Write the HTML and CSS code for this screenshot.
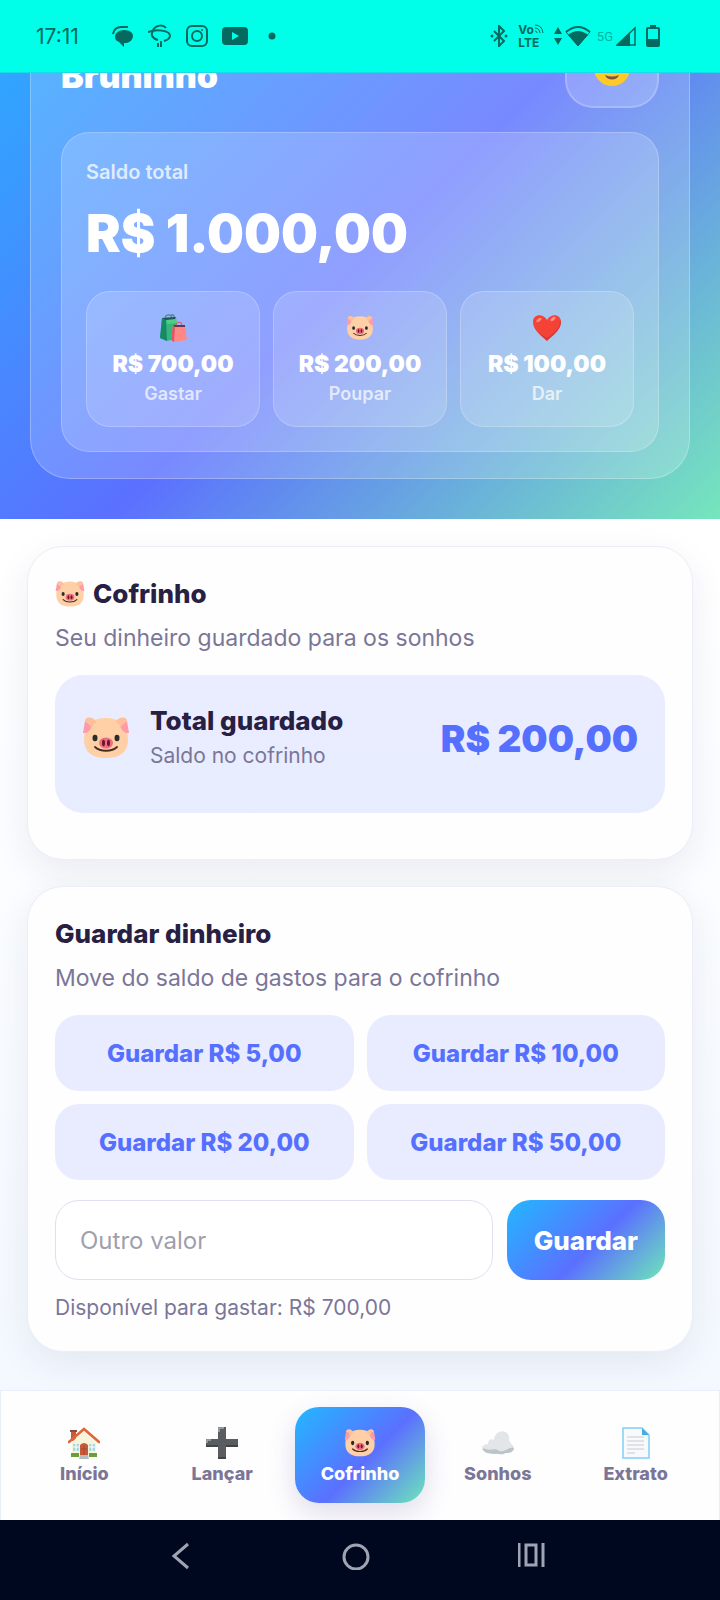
FILE: index.html
```html
<!DOCTYPE html>
<html lang="pt-BR">
<head>
    <meta charset="UTF-8">
    <meta name="viewport" content="width=device-width, initial-scale=1.0">
    <title>Cofrinho</title>
    <link rel="stylesheet" href="styles.css">
</head>
<body>
    <!-- Shared icons -->
    <svg class="sprite" aria-hidden="true">
        <symbol id="pig" viewBox="0 0 48 42">
            <path d="M24 1c14 0 22 8 22 21 0 14-9 19-22 19S2 36 2 22C2 9 10 1 24 1z" fill="#ffd0a6"/>
            <path d="M3 4L1 16q6 1 9-7zM45 4l2 12q-6 1-9-7z" fill="#ff9aa8"/>
            <path d="M3 5C3 0 7 0 10 1c3 1 4 3 4 5-2 0-4 2-5 5C8 7 6 5 3 5zM45 5c0-5-4-5-7-4-3 1-4 3-4 5 2 0 4 2 5 5 1-4 3-6 6-6z" fill="#ffbf98"/>
            <ellipse cx="13" cy="21" rx="2.500" ry="3.200" fill="#2b2b2b"/>
            <ellipse cx="35" cy="21" rx="2.500" ry="3.200" fill="#2b2b2b"/>
            <path d="M13 30c5 5 17 5 22 0" fill="none" stroke="#4a2b25" stroke-width="1.800" stroke-linecap="round"/>
            <ellipse cx="24" cy="26" rx="7" ry="5.500" fill="#ee6e80"/>
            <ellipse cx="21.500" cy="26" rx="1.500" ry="3.200" fill="#6b1630"/>
            <ellipse cx="26.500" cy="26" rx="1.500" ry="3.200" fill="#6b1630"/>
        </symbol>
        <symbol id="bags" viewBox="0 0 28 28">
            <path d="M6 5c0-5 7-6 7 0M15 5c1-3-1-5-3-4" fill="none" stroke="#3d8f80" stroke-width="1.200"/>
            <path d="M3 4l14-1 1 21-10 3-7-3z" fill="#33b87b"/>
            <path d="M3 4l4 1 1 22-7-3z" fill="#168a67"/>
            <path d="M7 5l10-2 1 6-10 1z" fill="#50cc87"/>
            <path d="M3 4l14-1-1 2-9 1z" fill="#25505a"/>
            <path d="M17 12c0-5 6-5 6 0" fill="none" stroke="#d85b68" stroke-width="1.200"/>
            <path d="M14 11h12l2 15-13 2-3-2z" fill="#ff8786"/>
            <path d="M14 11l2 1-1 16-3-2z" fill="#dc5868"/>
            <path d="M14 11h12v2H16z" fill="#653844"/>
        </symbol>
        <symbol id="heart" viewBox="0 0 28 26">
            <path d="M14 26C9 21 0 15 0 7 0-1 10-2 14 5c4-7 14-6 14 2 0 8-9 14-14 19z" fill="#f44336"/>
            <path d="M27 5c1 8-7 14-13 18C9 20 4 17 1 11c2 6 8 10 13 15 5-5 14-11 14-19z" fill="#c62828" opacity=".5"/>
            <ellipse cx="6" cy="5" rx="3" ry="1.500" fill="#ff8a80" transform="rotate(-35 6 5)"/>
            <ellipse cx="20" cy="4" rx="3" ry="1.500" fill="#ff8a80" transform="rotate(-35 20 4)"/>
        </symbol>
        <symbol id="smile" viewBox="0 0 36 36">
            <circle cx="18" cy="18" r="18" fill="#ffca28"/>
            <circle cx="11" cy="13" r="2.500" fill="#5d4037"/>
            <circle cx="25" cy="13" r="2.500" fill="#5d4037"/>
            <path d="M11 25q7 3 14 0c-2 6-12 6-14 0z" fill="#795548"/>
        </symbol>
        <symbol id="house" viewBox="0 0 32 32">
            <path d="M3 3h5v11H3z" fill="#c75b39"/>
            <path d="M2 3h7v2H2z" fill="#8d4b3b"/>
            <path d="M4 15L16 4l12 11v14H4z" fill="#faf3dc"/>
            <path d="M1 15L16 2l15 13" fill="none" stroke="#df6639" stroke-width="2.600" stroke-linecap="round"/>
            <path d="M5 17h6v7H5zM21 17h6v7h-6z" fill="#a7d9df"/>
            <path d="M8 17v7M5 20h6M24 17v7M21 20h6" stroke="#fff"/>
            <path d="M12 29V18q4-4 8 0v11z" fill="#c75b39"/>
            <path d="M16 18v10M13 22h6" stroke="#a34930"/>
            <path d="M3 26h8v4H3zM21 26h8v4h-8z" fill="#689f38"/>
            <path d="M12 28h8l1 4H11z" fill="#b7bcc1"/>
        </symbol>
        <symbol id="plus" viewBox="0 0 32 32">
            <path d="M12 0h8v12h12v8H20v12h-8V20H0v-8h12z" fill="#5a5d5f"/>
            <path d="M13 5V1h5M1 16v-3h4" fill="none" stroke="#a8aaab" stroke-width="1.500"/>
            <path d="M12 31h8M0 19h12M20 19h12" stroke="#424547" stroke-width="2"/>
        </symbol>
        <symbol id="cloud" viewBox="0 0 32 24">
            <path d="M4 21c-7-2-4-8 2-8 0-4 3-6 6-4 1-12 16-11 15-1 0 4 5 6 5 9 0 5-6 5-9 5-3 3-7 0-10 1-3 0-6 0-9-2z" fill="#e2e6e9"/>
            <path d="M1 17c7 4 11-1 16 3 6 2 9-5 15-3-1 5-6 5-9 5-3 3-7 0-10 1-5-1-12 0-12-6z" fill="#b9c5cb"/>
        </symbol>
        <symbol id="page" viewBox="0 0 28 32">
            <path d="M1 1h19l7 7v23H1z" fill="#f7f9fa" stroke="#81d0f5" stroke-width="1.500"/>
            <path d="M20 1l7 7h-7z" fill="#42aee0"/>
            <path d="M5 10h17M5 14h17M5 18h17M5 22h17M5 26h8" stroke="#c6ccd0"/>
        </symbol>
    </svg>

    <div class="status-bar">
        <div class="status-group">
            <span class="clock">17:11</span>
            <svg width="22" height="22" viewBox="0 0 22 22">
                <path d="M12 5c6 0 9 3 9 6s-3 7-7 7h-2v4l-5-5c-3-1-4-3-4-5 0-4 4-7 9-7z" fill="currentColor"/>
                <path d="M1 9C2 4 5 2 9 2h7" fill="none" stroke="currentColor" stroke-width="2"/>
            </svg>
            <svg width="24" height="24" viewBox="0 0 24 24" fill="none" stroke="currentColor">
                <path d="M5 6C8 1 15 0 18 4" stroke-width="2"/>
                <path d="M0 8c8-3 22-2 22 4 0 3-3 4-6 5" stroke-width="2"/>
                <path d="M5 7c-3 4 0 8 5 9" stroke-width="2"/>
                <path d="M10 23v-4M13 23v-6" stroke-width="2"/>
            </svg>
            <svg width="22" height="22" viewBox="0 0 22 22" fill="none" stroke="currentColor" stroke-width="2">
                <rect x="1" y="1" width="20" height="20" rx="5"/>
                <circle cx="11" cy="11" r="5"/>
                <circle cx="16" cy="5" r="1" fill="currentColor" stroke="none"/>
            </svg>
            <svg width="26" height="20" viewBox="0 0 26 20">
                <rect x="0" y="1" width="26" height="18" rx="4" fill="currentColor"/>
                <path d="M10 6l7 4-7 4z" fill="#00ffe8"/>
            </svg>
            <svg class="more-dot" width="8" height="8" viewBox="0 0 8 8"><circle cx="4" cy="4" r="3.500" fill="currentColor"/></svg>
        </div>
        <div class="status-group status-right">
            <svg width="18" height="22" viewBox="0 0 18 22">
                <path d="M4 6l10 10-5 5V1l5 5L4 16" fill="none" stroke="currentColor" stroke-width="2"/>
                <circle cx="2" cy="11" r="1.500" fill="currentColor"/>
                <circle cx="16" cy="11" r="1.500" fill="currentColor"/>
            </svg>
            <span class="volte">
                <span>Vo<svg width="10" height="10" viewBox="0 0 10 10" fill="none" stroke="currentColor"><path d="M1 1q7 0 8 8M1 4q4 0 5 5M1 7q2 0 2 2"/></svg></span>
                <span>LTE</span>
            </span>
            <span class="wifi">
                <svg width="8" height="18" viewBox="0 0 8 18"><path d="M4 0l4 7H0zM4 18l4-7H0z" fill="currentColor"/></svg>
                <svg width="26" height="22" viewBox="0 0 26 22">
                    <path d="M13 21L3 10q10-8 20 0z" fill="currentColor"/>
                    <path d="M1 7q12-10 24 0" fill="none" stroke="currentColor" stroke-width="2"/>
                    <path d="M1 7l12 14L25 7" fill="none" stroke="currentColor"/>
                </svg>
            </span>
            <span class="signal">
                <span class="net">5G</span>
                <svg width="20" height="20" viewBox="0 0 20 20">
                    <path d="M0 20L14 6v14z" fill="currentColor"/>
                    <path d="M1 19L19 2v17z" fill="none" stroke="currentColor" stroke-width="1.500"/>
                </svg>
            </span>
            <svg width="14" height="22" viewBox="0 0 14 22">
                <path d="M4 0h6v4H4z" fill="currentColor"/>
                <rect x="1" y="3" width="12" height="18" rx="1" fill="none" stroke="currentColor" stroke-width="2"/>
                <path d="M1 14h12v7H1z" fill="currentColor"/>
            </svg>
        </div>
    </div>

    <div class="screen">
        <header class="hero">
            <div class="hero-card">
                <div class="hero-top">
                    <h1>Bruninho</h1>
                    <button class="avatar" type="button" aria-label="Perfil">
                        <svg width="36" height="36"><use href="#smile"/></svg>
                    </button>
                </div>
                <div class="balance">
                    <p class="balance-label">Saldo total</p>
                    <p class="balance-value">R$ 1.000,00</p>
                    <div class="pots">
                        <div class="pot">
                            <svg class="pot-icon" width="28" height="28"><use href="#bags"/></svg>
                            <strong>R$ 700,00</strong>
                            <span>Gastar</span>
                        </div>
                        <div class="pot">
                            <svg class="pot-icon" width="28" height="26"><use href="#pig"/></svg>
                            <strong>R$ 200,00</strong>
                            <span>Poupar</span>
                        </div>
                        <div class="pot">
                            <svg class="pot-icon" width="28" height="26"><use href="#heart"/></svg>
                            <strong>R$ 100,00</strong>
                            <span>Dar</span>
                        </div>
                    </div>
                </div>
            </div>
        </header>

        <main>
            <section class="card card-saved">
                <h2><svg width="30" height="28"><use href="#pig"/></svg>Cofrinho</h2>
                <p class="subtitle">Seu dinheiro guardado para os sonhos</p>
                <div class="total">
                    <svg width="48" height="42"><use href="#pig"/></svg>
                    <div class="total-text">
                        <h3>Total guardado</h3>
                        <p>Saldo no cofrinho</p>
                    </div>
                    <strong class="total-value">R$ 200,00</strong>
                </div>
            </section>

            <section class="card">
                <h2>Guardar dinheiro</h2>
                <p class="subtitle">Move do saldo de gastos para o cofrinho</p>
                <div class="quick">
                    <button type="button">Guardar R$ 5,00</button>
                    <button type="button">Guardar R$ 10,00</button>
                    <button type="button">Guardar R$ 20,00</button>
                    <button type="button">Guardar R$ 50,00</button>
                </div>
                <form class="custom">
                    <input type="text" inputmode="decimal" placeholder="Outro valor" aria-label="Outro valor">
                    <button type="button">Guardar</button>
                </form>
                <p class="hint">Disponível para gastar: R$ 700,00</p>
            </section>
        </main>
    </div>

    <nav class="tabs">
        <a href="#inicio"><svg width="32" height="32"><use href="#house"/></svg>Início</a>
        <a href="#lancar"><svg width="32" height="32"><use href="#plus"/></svg>Lançar</a>
        <a href="#cofrinho" class="active"><svg width="32" height="28"><use href="#pig"/></svg>Cofrinho</a>
        <a href="#sonhos"><svg width="32" height="24"><use href="#cloud"/></svg>Sonhos</a>
        <a href="#extrato"><svg width="28" height="32"><use href="#page"/></svg>Extrato</a>
    </nav>

    <div class="system-nav">
        <button type="button" aria-label="Voltar">
            <svg width="28" height="28" viewBox="0 0 28 28"><path d="M22 2L8 14l14 12" fill="none" stroke="currentColor" stroke-width="3"/></svg>
        </button>
        <button type="button" aria-label="Tela inicial">
            <svg width="28" height="28" viewBox="0 0 28 28"><circle cx="14" cy="15" r="12" fill="none" stroke="currentColor" stroke-width="3"/></svg>
        </button>
        <button type="button" aria-label="Recentes">
            <svg width="28" height="28" viewBox="0 0 28 28"><path d="M1 1v24M25 1v24M8 3h10v20H8z" fill="none" stroke="currentColor" stroke-width="3"/></svg>
        </button>
    </div>
</body>
</html>
```

FILE: styles.css
```css
* {
    box-sizing: border-box;
}
body {
    display: flex;
    flex-direction: column;
    height: 100vh;
    margin: 0;
    font-family: Inter, 'Liberation Sans', sans-serif;
    color: #272043;
    background: linear-gradient(180deg, #ffffff 35%, #f1f7ff 100%);
    overflow: hidden;
}
h1, h2, h3, p {
    margin: 0;
}
button, input {
    font-family: inherit;
}
button {
    border: none;
    padding: 0;
}
svg {
    flex: none;
}
.sprite {
    position: absolute;
    width: 0;
    height: 0;
}

/* Phone status bar */
.status-bar {
    flex: none;
    display: flex;
    justify-content: space-between;
    align-items: center;
    height: 73px;
    padding: 0 60px 0 36px;
    background: #00ffe8;
    border-bottom: 1px solid #16dce9;
    color: #04695f;
}
.status-group {
    display: flex;
    align-items: center;
    gap: 14px;
}
.clock {
    width: 62px;
    font-size: 21px;
}
.more-dot {
    margin-left: 6px;
}
.status-right {
    gap: 10px;
}
.volte {
    display: flex;
    flex-direction: column;
    font-size: 12px;
    font-weight: 700;
    line-height: 13px;
}
.wifi, .signal {
    display: flex;
    align-items: center;
    gap: 3px;
}
.signal {
    margin-left: -4px;
}
.net {
    font-family: Roboto, sans-serif;
    font-size: 13px;
    opacity: 0.5;
}

.screen {
    flex: 1;
    min-height: 0;
    overflow: hidden;
}

/* Header, scrolled part of the way up */
.hero {
    margin-top: -193px;
    padding: 110px 30px 40px;
    background: linear-gradient(135deg, #22b8ff 0%, #5b70ff 55%, #76e6bc 100%);
    color: #fff;
}
.hero-card {
    padding: 37px 30px 26px;
    border: 1px solid rgba(255, 255, 255, 0.26);
    border-radius: 40px;
    background: rgba(255, 255, 255, 0.18);
}
.hero-top {
    display: flex;
    justify-content: space-between;
    align-items: flex-end;
    margin-bottom: 24px;
}
.hero-top h1 {
    padding-bottom: 8px;
    font-size: 34px;
    font-weight: 900;
    line-height: 48px;
}
.avatar {
    display: flex;
    justify-content: center;
    align-items: center;
    width: 94px;
    height: 80px;
    border: 2px solid rgba(255, 255, 255, 0.2);
    border-radius: 28px;
    background: rgba(255, 255, 255, 0.18);
}
.balance {
    padding: 24px;
    border: 1px solid rgba(255, 255, 255, 0.22);
    border-radius: 28px;
    background: rgba(255, 255, 255, 0.18);
}
.balance-label {
    font-size: 20px;
    font-weight: 600;
    line-height: 30px;
    opacity: 0.75;
}
.balance-value {
    margin: 16px 0 26px;
    font-size: 52px;
    font-weight: 900;
    line-height: 62px;
}
.pots {
    display: grid;
    grid-template-columns: repeat(3, 1fr);
    gap: 13px;
}
.pot {
    display: flex;
    flex-direction: column;
    align-items: center;
    padding: 18px 8px 20px;
    border: 1px solid rgba(255, 255, 255, 0.22);
    border-radius: 24px;
    background: rgba(255, 255, 255, 0.15);
}
.pot-icon {
    margin: 4px 0;
    height: 28px;
}
.pot strong {
    font-size: 23px;
    font-weight: 900;
    line-height: 36px;
}
.pot span {
    font-size: 18px;
    font-weight: 600;
    line-height: 24px;
    opacity: 0.7;
}

/* Cards */
main {
    display: flex;
    flex-direction: column;
    gap: 26px;
    padding: 27px;
}
.card {
    padding: 28px 27px;
    border: 1px solid #ecedf8;
    border-radius: 36px;
    background: #fefeff;
    box-shadow: 0 12px 36px rgba(39, 32, 80, 0.08);
}
.card-saved {
    padding-bottom: 46px;
}
.card h2 {
    display: flex;
    align-items: center;
    gap: 8px;
    font-size: 26px;
    font-weight: 800;
    line-height: 38px;
}
.subtitle {
    margin: 8px 0 20px;
    font-size: 23px;
    line-height: 34px;
    color: #7b7698;
}
.total {
    display: flex;
    align-items: center;
    gap: 20px;
    padding: 28px 27px 40px;
    border-radius: 28px;
    background: linear-gradient(180deg, #ebecff, #e7edff);
}
.total-text {
    flex: 1;
}
.total-text h3 {
    font-size: 26px;
    font-weight: 800;
    line-height: 36px;
}
.total-text p {
    font-size: 21px;
    line-height: 34px;
    color: #7b7698;
}
.total-value {
    font-size: 37px;
    font-weight: 900;
    color: #5570ff;
}
.quick {
    display: grid;
    grid-template-columns: 1fr 1fr;
    gap: 13px;
}
.quick button {
    height: 76px;
    border-radius: 24px;
    background: #e9ebff;
    color: #5570ff;
    font-size: 24px;
    font-weight: 800;
}
.custom {
    display: flex;
    gap: 14px;
    margin: 20px 0 13px;
}
.custom input {
    flex: 1;
    min-width: 0;
    height: 80px;
    padding: 0 24px;
    border: 1px solid #dfe0f2;
    border-radius: 24px;
    background: #fff;
    color: #272043;
    font-size: 24px;
}
.custom input::placeholder {
    color: #a09fac;
}
.custom button {
    padding: 0 27px;
    border-radius: 24px;
    background: linear-gradient(135deg, #22b8ff 0%, #5b70ff 55%, #6ee6b8 100%);
    color: #fff;
    font-size: 26px;
    font-weight: 800;
}
.hint {
    font-size: 21px;
    line-height: 30px;
    color: #7b7698;
}

/* Bottom tabs */
.tabs {
    flex: none;
    display: grid;
    grid-template-columns: repeat(5, 1fr);
    gap: 7px;
    padding: 16px 18px 17px;
    border: 1px solid #e9effa;
    border-bottom: none;
    background: #fefeff;
}
.tabs a {
    display: flex;
    flex-direction: column;
    align-items: center;
    padding: 20px 0 14px;
    border-radius: 24px;
    color: #7b7698;
    font-size: 18px;
    font-weight: 800;
    line-height: 30px;
    text-decoration: none;
}
.tabs svg {
    height: 32px;
}
.tabs .active {
    background: linear-gradient(135deg, #22b8ff 0%, #5b70ff 55%, #6ee6b8 100%);
    box-shadow: 0 10px 28px rgba(60, 40, 120, 0.16);
    color: #fff;
}

/* Phone navigation bar */
.system-nav {
    flex: none;
    display: grid;
    grid-template-columns: repeat(3, 1fr);
    align-items: center;
    height: 80px;
    padding: 0 100px 8px 92px;
    background: #000820;
}
.system-nav button {
    display: flex;
    justify-content: center;
    background: none;
    color: #9fa3b2;
}
```
